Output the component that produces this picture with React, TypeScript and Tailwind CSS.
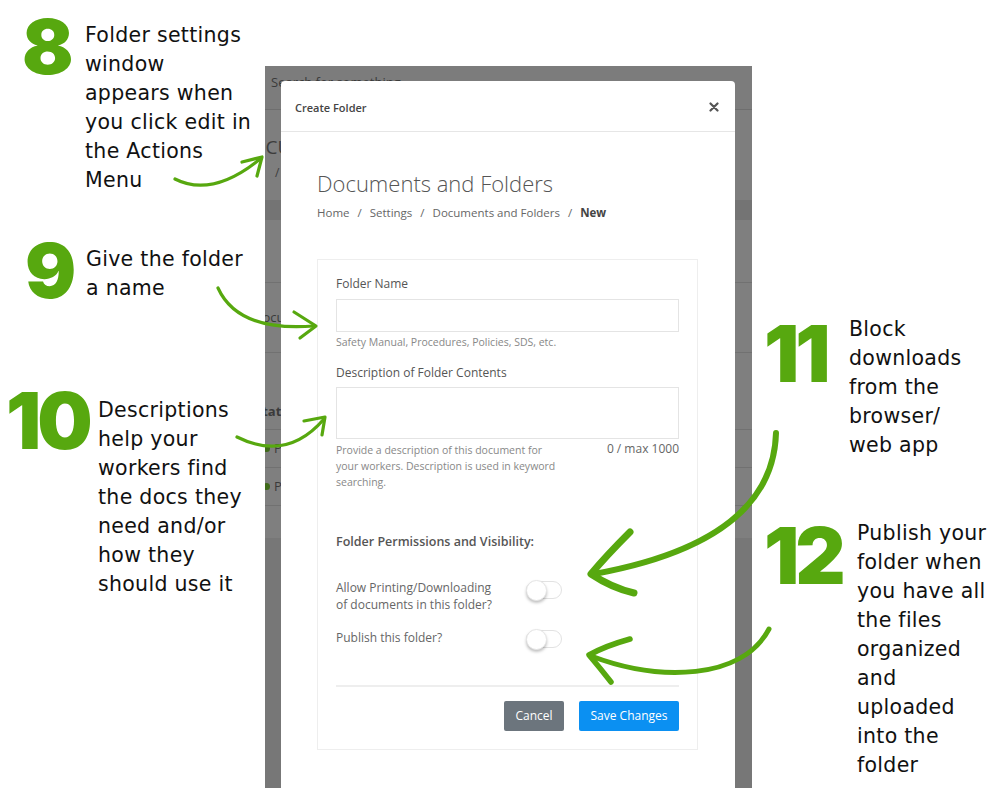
import React from "react";

const GREEN = "#57a80f";

function Toggle() {
  return (
    <div className="relative w-[36px] h-[18px] rounded-full border border-[#e2e2e2] bg-white">
      <div className="absolute left-[-1px] top-[-2px] w-[21px] h-[21px] rounded-full bg-white border border-[#e6e6e6] shadow-[0_2px_3px_rgba(0,0,0,0.25)]" />
    </div>
  );
}

function Lines({ lines, cls = "" }: { lines: string[]; cls?: string }) {
  return (
    <div className={`font-['DejaVu_Sans',sans-serif] text-[20.5px] leading-[29px] text-[#111] tracking-[0.3px] ${cls}`}>
      {lines.map((l, i) => (
        <div key={i} className="whitespace-nowrap">{l}</div>
      ))}
    </div>
  );
}

function Num({ n, cls }: { n: string; cls: string }) {
  return (
    <div
      className={`font-['Inter',sans-serif] font-black leading-none text-[#57a80f] tracking-[-4px] ${cls}`}
    >
      {n}
    </div>
  );
}

function Arrows() {
  return (
    <svg
      className="absolute inset-0 pointer-events-none"
      width="1000"
      height="800"
      viewBox="0 0 1000 800"
      fill="none"
      stroke={GREEN}
      strokeLinecap="round"
      strokeLinejoin="round"
    >
      {/* 8 */}
      <path d="M175 179 Q 212 198 260 159" strokeWidth="3.2" />
      <path d="M242 162 L262 157 L257 176" strokeWidth="3.2" />
      {/* 9 */}
      <path d="M218 288 Q 238 332 314 326" strokeWidth="3.2" />
      <path d="M294 312 L316 326 L300 338" strokeWidth="3.2" />
      {/* 10 */}
      <path d="M237 437 Q 287 462 324 419" strokeWidth="3.2" />
      <path d="M304 421 L325 417 L322 435" strokeWidth="3.2" />
      {/* 11 */}
      <path d="M776 433 C 774 505 715 552 594 574" strokeWidth="6" />
      <path d="M630 532 Q 606 556 591 574 Q 612 588 634 593" strokeWidth="7" />
      {/* 12 */}
      <path d="M769 629 C 742 680 660 682 591 656" strokeWidth="5" />
      <path d="M630 639 Q 605 646 589 655 Q 600 668 611 682" strokeWidth="5.5" />
    </svg>
  );
}

function BackgroundPage() {
  return (
    <div className="flex flex-col h-full bg-[#777777] font-['Open_Sans',sans-serif]">
      <div className="h-[44px] shrink-0 bg-[#7c7c7c] border-b border-[#6e6e6e] pl-[6px] pt-[7px] text-[13px] text-[#3a3a3a] whitespace-nowrap">
        Search for something
      </div>
      <div className="h-[90px] shrink-0 bg-[#7e7e7e] overflow-hidden whitespace-nowrap">
        <div className="ml-[-28px] mt-[24px] text-[19px] leading-[26px] text-[#3c3c3c]">DOCUMENTS</div>
        <div className="ml-[10px] mt-[4px] text-[12px] text-[#3c3c3c]">/</div>
      </div>
      <div className="h-[20px] shrink-0 bg-[#747474]" />
      <div className="h-[318px] shrink-0 bg-[#7f7f7f] flex flex-col whitespace-nowrap overflow-hidden text-[13px] text-[#3a3a3a]">
        <div className="h-[63px] border-b border-[#717171]" />
        <div className="h-[70px] border-b border-[#717171] flex items-center ml-[-12px]">Documents</div>
        <div className="h-[77px] border-b border-[#717171] flex items-end pb-[8px] ml-[-10px] font-bold">Status</div>
        <div className="h-[38px] border-b border-[#717171] flex items-center gap-[4px] ml-[-2px]">
          <span className="w-[7px] h-[7px] rounded-full bg-[#3f6a1a]" />
          Published
        </div>
        <div className="h-[38px] border-b border-[#717171] flex items-center gap-[4px] ml-[-2px]">
          <span className="w-[7px] h-[7px] rounded-full bg-[#3f6a1a]" />
          Published
        </div>
      </div>
      <div className="flex-1 bg-[#777777]" />
    </div>
  );
}

function Modal() {
  return (
    <div className="absolute left-[16px] top-[15px] w-[454px] bottom-0 bg-white rounded-t-[4px] font-['Open_Sans',sans-serif]">
      <div className="h-[51px] border-b border-[#e6e6e6] flex items-start justify-between pl-[14px] pr-[16px] pt-[19px]">
        <span className="text-[11px] font-semibold text-[#444] leading-[16px]">Create Folder</span>
        <svg className="mt-[2px]" width="10" height="10" viewBox="0 0 10 10" stroke="#555" strokeWidth="2.2" strokeLinecap="round">
          <path d="M1.5 1.5 L8.5 8.5 M8.5 1.5 L1.5 8.5" />
        </svg>
      </div>
      <div className="pl-[36px] pr-[36px] pt-[37px]">
        <div className="text-[22px] font-light text-[#555] leading-[28px]">Documents and Folders</div>
        <div className="mt-[8px] text-[11.5px] text-[#666] leading-[16px] whitespace-nowrap">
          Home <span className="mx-[5px]">/</span> Settings <span className="mx-[5px]">/</span> Documents and Folders{" "}
          <span className="mx-[5px]">/</span> <span className="font-bold text-[#444]">New</span>
        </div>
        <div className="mt-[38px] w-[381px] h-[491px] border border-[#eeeeee] px-[18px] pt-[16px]">
          <div className="text-[12px] text-[#555] leading-[16px]">Folder Name</div>
          <div className="mt-[7px] h-[33px] border border-[#e4e4e4]" />
          <div className="mt-[3px] text-[10.5px] text-[#888] leading-[15px]">Safety Manual, Procedures, Policies, SDS, etc.</div>
          <div className="mt-[15px] text-[12px] text-[#555] leading-[16px]">Description of Folder Contents</div>
          <div className="mt-[6px] h-[52px] border border-[#e4e4e4]" />
          <div className="flex justify-between items-start mt-[3px]">
            <div className="w-[222px] text-[10.5px] text-[#888] leading-[16px]">
              Provide a description of this document for your workers. Description is used in keyword searching.
            </div>
            <div className="text-[12px] text-[#666] leading-[14px]">0 / max 1000</div>
          </div>
          <div className="mt-[44px] text-[12.5px] font-semibold text-[#555] leading-[16px]">
            Folder Permissions and Visibility:
          </div>
          <div className="mt-[29px] flex items-start">
            <div className="w-[190px] text-[12px] text-[#666] leading-[17px]">
              Allow Printing/Downloading
              <br />
              of documents in this folder?
            </div>
            <div className="mt-[2px]">
              <Toggle />
            </div>
          </div>
          <div className="mt-[16px] flex items-start">
            <div className="w-[190px] text-[12px] text-[#666] leading-[17px]">Publish this folder?</div>
            <div className="mt-[1px]">
              <Toggle />
            </div>
          </div>
          <div className="mt-[37px] border-t-2 border-[#eeeeee]" />
          <div className="mt-[14px] flex justify-end gap-[15px]">
            <button className="w-[60px] h-[30px] rounded-[2px] bg-[#6c757d] text-white text-[12px]">Cancel</button>
            <button className="w-[100px] h-[30px] rounded-[2px] bg-[#0b90f2] text-white text-[12px]">Save Changes</button>
          </div>
        </div>
      </div>
    </div>
  );
}

export default function App() {
  return (
    <div className="relative w-[1000px] h-[800px] bg-white overflow-hidden flex">
      {/* Left annotations */}
      <div className="w-[265px] shrink-0 flex flex-col">
        <div className="flex items-start mt-[8px]">
          <Num n="8" cls="text-[76px] ml-[22px] w-[63px]" />
          <Lines cls="mt-[13px]" lines={["Folder settings", "window", "appears when", "you click edit in", "the Actions", "Menu"]} />
        </div>
        <div className="flex items-start mt-[50px]">
          <Num n="9" cls="text-[76px] ml-[25px] mt-[-13px] w-[61px]" />
          <Lines lines={["Give the folder", "a name"]} />
        </div>
        <div className="flex items-start mt-[88px]">
          <Num n="10" cls="text-[78px] ml-[6px] mt-[-14px] w-[92px]" />
          <Lines lines={["Descriptions", "help your", "workers find", "the docs they", "need and/or", "how they", "should use it"]} />
        </div>
      </div>

      {/* Screenshot */}
      <div className="w-[487px] shrink-0 mt-[66px] h-[722px] relative overflow-hidden">
        <BackgroundPage />
        <Modal />
      </div>

      {/* Right annotations */}
      <div className="flex-1 flex flex-col">
        <div className="flex items-start mt-[315px]">
          <Num n="11" cls="text-[78px] ml-[12px] mt-[0px] w-[85px]" />
          <Lines lines={["Block", "downloads", "from the", "browser/", "web app"]} />
        </div>
        <div className="flex items-start mt-[59px]">
          <Num n="12" cls="text-[78px] ml-[12px] mt-[-2px] w-[93px]" />
          <Lines lines={["Publish your", "folder when", "you have all", "the files", "organized", "and", "uploaded", "into the", "folder"]} />
        </div>
      </div>

      <Arrows />
    </div>
  );
}
